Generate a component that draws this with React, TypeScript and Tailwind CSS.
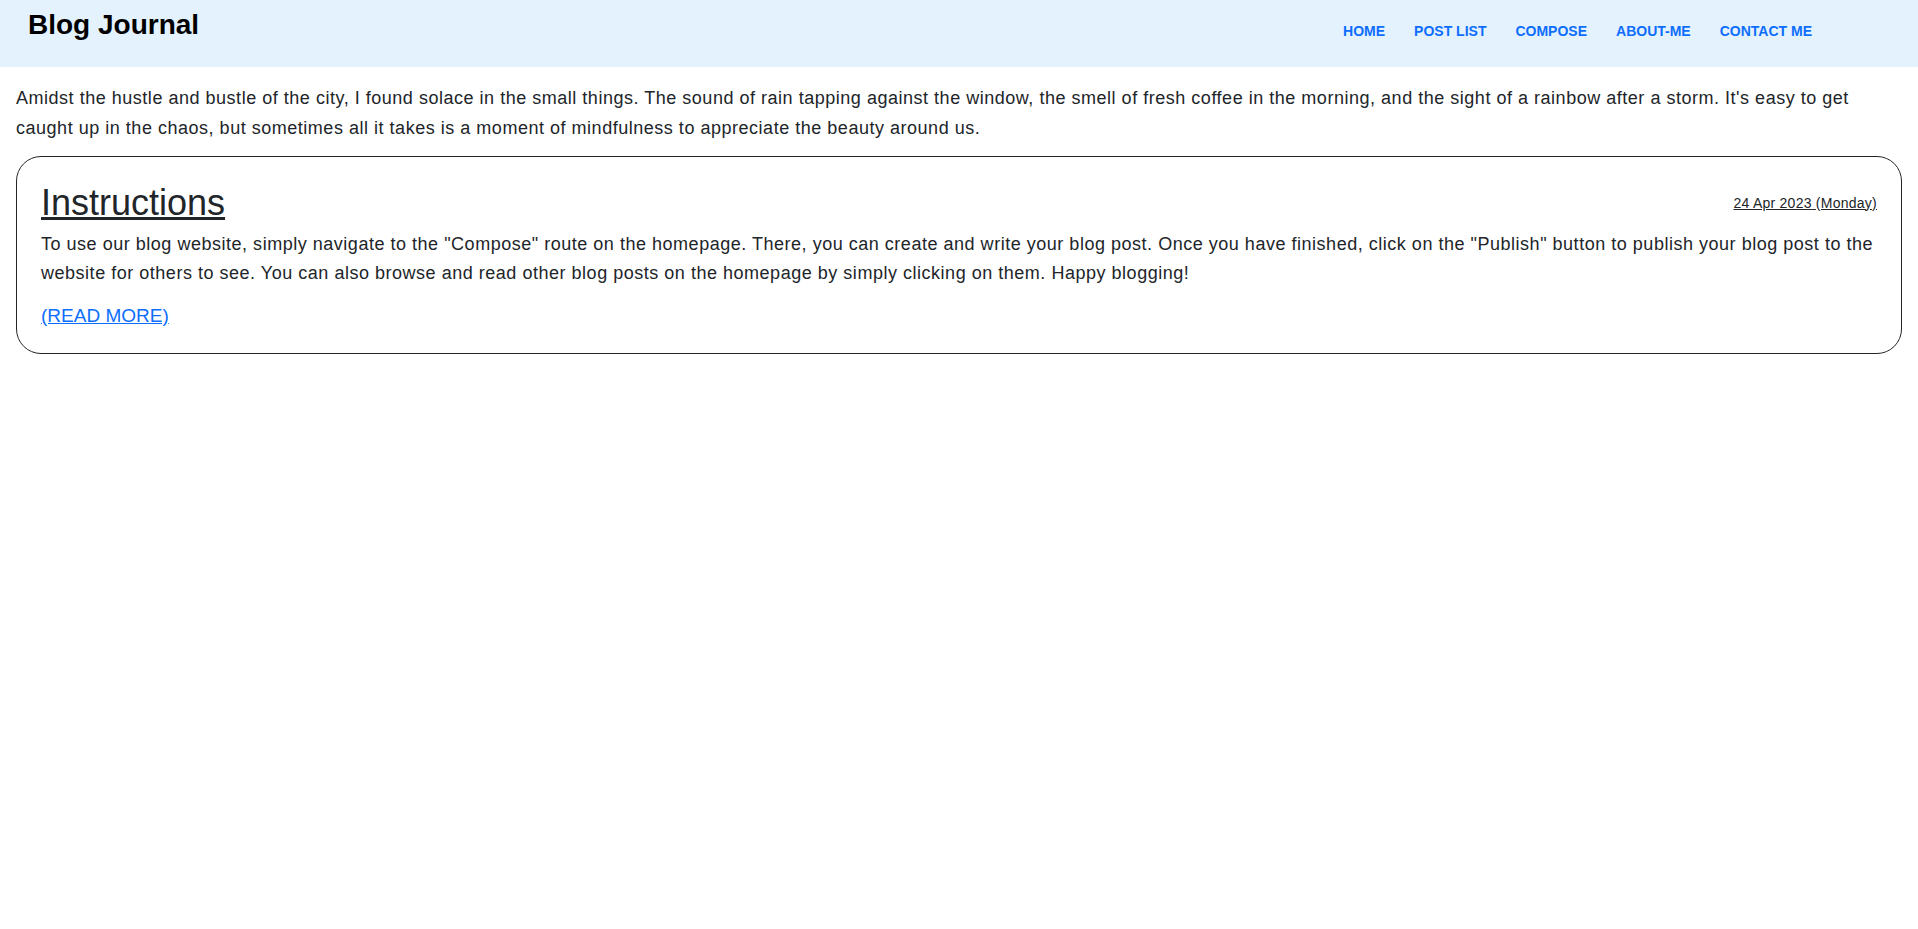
const navLinks = ["Home", "Post List", "Compose", "About-me", "Contact me"];

const posts = [
  {
    id: 1,
    title: "Instructions",
    date: "24 Apr 2023",
    day: "(Monday)",
    body: 'To use our blog website, simply navigate to the "Compose" route on the homepage. There, you can create and write your blog post. Once you have finished, click on the "Publish" button to publish your blog post to the website for others to see. You can also browse and read other blog posts on the homepage by simply clicking on them. Happy blogging!',
  },
];

function Header() {
  return (
    <header className="flex h-[67px] items-start justify-between bg-[#e3f2fd]">
      <a href="#" className="pl-7 pt-[8px] text-[28px] font-bold leading-[34px] text-black">
        Blog Journal
      </a>
      <nav className="flex gap-[29px] pr-[106px] pt-[21px]">
        {navLinks.map((link) => (
          <a
            key={link}
            href="#"
            className="text-[14px] font-bold uppercase leading-[20px] text-[#0d6efd]"
          >
            {link}
          </a>
        ))}
      </nav>
    </header>
  );
}

export default function App() {
  return (
    <div className="min-h-screen bg-white font-['Liberation_Sans',Arial,sans-serif] text-[#212529]">
      <Header />
      <main className="px-4">
        <p className="pt-4 text-[18px] leading-[30px] tracking-[0.52px]">
          Amidst the hustle and bustle of the city, I found solace in the small things. The sound of
          rain tapping against the window, the smell of fresh coffee in the morning, and the sight of
          a rainbow after a storm. It's easy to get caught up in the chaos, but sometimes all it takes
          is a moment of mindfulness to appreciate the beauty around us.
        </p>

        {posts.map((post) => (
          <div
            key={post.id}
            className="mt-[13px] rounded-[25px] border border-[#212529] p-6"
          >
            <div className="flex items-center justify-between">
              <a href="#" className="text-[36px] leading-[43px] underline">
                {post.title}
              </a>
              <a href="#" className="text-[14px] leading-[20px] tracking-[0.25px] underline">
                {post.date} {post.day}
              </a>
            </div>
            <p className="mt-[6px] text-[18px] leading-[29px] tracking-[0.52px]">{post.body}</p>
            <a
              href="#"
              className="mt-[15px] block w-fit text-[19px] leading-[26px] text-[#0d6efd] underline"
            >
              (READ MORE)
            </a>
          </div>
        ))}
      </main>
    </div>
  );
}
